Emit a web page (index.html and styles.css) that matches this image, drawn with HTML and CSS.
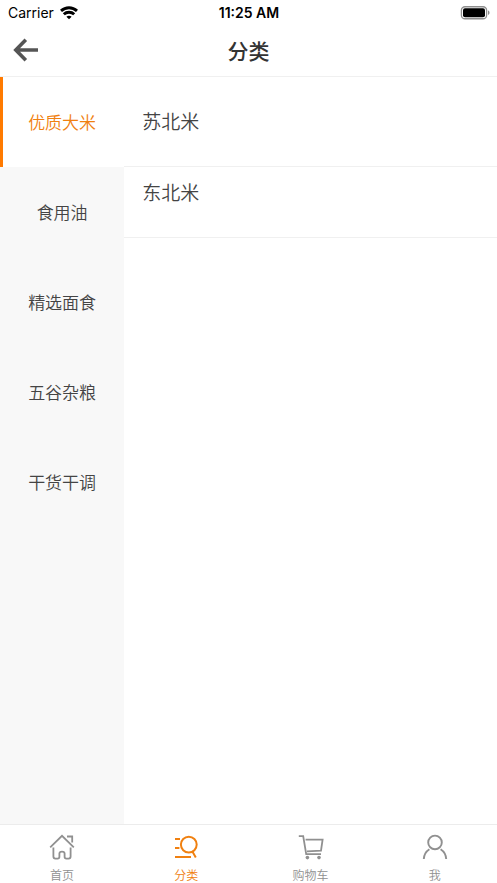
FILE: index.html
```html
<!DOCTYPE html>
<html lang="zh-CN">
<head>
    <meta charset="utf-8" />
    <meta name="viewport" content="width=device-width, initial-scale=1" />
    <title>分类</title>
    <link rel="stylesheet" href="styles.css">
</head>
<body>
    <div class="statusbar">
        <div class="carrier">
            <span>Carrier</span>
            <svg class="wifi" width="18" height="14" viewBox="0 0 18 14" fill="none" stroke="#000" stroke-width="2.9">
                <path d="M1 4.9C5.6 0.6 12.4 0.6 17 4.9" />
                <path d="M3.8 8.3C6.7 5.6 11.3 5.6 14.2 8.3" />
                <path d="M9 13.3L6.4 10.8C7.9 9.5 10.1 9.5 11.6 10.8Z" fill="#000" stroke="none" />
            </svg>
        </div>
        <div class="clock">11:25 AM</div>
        <div class="battery">
            <svg width="30" height="14" viewBox="0 0 30 14">
                <rect x="1.4" y="0.75" width="25.2" height="12" rx="3.6" fill="none" stroke="#8e8e8e" stroke-width="1.3" />
                <rect x="3" y="2.3" width="22" height="9" rx="2" />
                <path d="M28 4.6C30 5.2 30 8.4 28 9Z" fill="#8e8e8e" />
            </svg>
        </div>
    </div>

    <header class="header">
        <button class="back" type="button" aria-label="返回">
            <svg width="26" height="24" viewBox="0 0 26 24" fill="none" stroke="#555" stroke-width="3.6">
                <path d="M25 12H3M12.8 1.8L2.8 12L12.8 22.2" />
            </svg>
        </button>
        <h1 class="title">分类</h1>
    </header>

    <main class="content">
        <nav class="sidebar">
            <a class="category active" href="#">优质大米</a>
            <a class="category" href="#">食用油</a>
            <a class="category" href="#">精选面食</a>
            <a class="category" href="#">五谷杂粮</a>
            <a class="category" href="#">干货干调</a>
        </nav>
        <div class="list">
            <a class="item" href="#">苏北米</a>
            <a class="item" href="#">东北米</a>
        </div>
    </main>

    <nav class="tabbar">
        <a class="tab" href="#">
            <svg width="26" height="26" viewBox="0 0 26 26" fill="none" stroke="currentColor" stroke-width="1.8">
                <path d="M1.2 13.4L13 1.8L24.8 13.4" />
                <path d="M18 2.5H23.2V8.6" />
                <path d="M4.4 13.5V22.6Q4.4 24.6 6.4 24.6H8.6Q10.4 24.6 10.4 22.8V19.6Q10.4 17.6 13 17.6T15.6 19.6V22.8Q15.6 24.6 17.4 24.6H19.6Q21.6 24.6 21.6 22.6V13.5" />
            </svg>
            <span>首页</span>
        </a>
        <a class="tab active" href="#">
            <svg width="26" height="26" viewBox="0 0 26 26" fill="none" stroke="currentColor" stroke-width="2">
                <circle cx="15.8" cy="10.6" r="7.9" />
                <path d="M19.4 17.6L22.8 23.6M2 5H7M2 14H6.4M2 23H18" />
            </svg>
            <span>分类</span>
        </a>
        <a class="tab" href="#">
            <svg width="26" height="26" viewBox="0 0 26 26" fill="none" stroke="currentColor" stroke-width="1.8">
                <path d="M0.8 2.2H5.2L8.2 20.2H23" />
                <path d="M7.6 5.6H24.6L23 16.6L9 17.4" />
                <circle cx="9.4" cy="23.6" r="1.8" fill="currentColor" stroke="none" />
                <circle cx="21" cy="23.6" r="1.8" fill="currentColor" stroke="none" />
            </svg>
            <span>购物车</span>
        </a>
        <a class="tab" href="#">
            <svg width="26" height="26" viewBox="0 0 26 26" fill="none" stroke="currentColor" stroke-width="1.9">
                <circle cx="13" cy="8.4" r="6.8" />
                <path d="M1.8 25C2 20.8 4 17.4 7.4 15.2M18.6 15.2C22 17.4 24 20.8 24.2 25" />
            </svg>
            <span>我</span>
        </a>
    </nav>
</body>
</html>
```
FILE: styles.css
```css
* {
    box-sizing: border-box;
}
body {
    margin: 0;
    min-height: 100vh;
    display: flex;
    flex-direction: column;
    background: #fff;
    color: #444;
    font-family: Inter, "Noto Sans CJK SC", sans-serif;
    font-weight: 350;
}
a {
    color: inherit;
    text-decoration: none;
}
svg {
    display: block;
    flex-shrink: 0;
}

/* status bar */
.statusbar {
    height: 25px;
    padding: 0 7px 0 8px;
    display: grid;
    grid-template-columns: 1fr auto 1fr;
    align-items: center;
    color: #000;
    font-size: 14px;
    font-weight: 400;
}
.carrier {
    display: flex;
    align-items: center;
    gap: 6px;
}
.clock {
    font-size: 14px;
    font-weight: 600;
}
.battery {
    justify-self: end;
}

/* header */
.header {
    height: 52px;
    padding: 0 13px 2px;
    display: grid;
    grid-template-columns: 1fr auto 1fr;
    align-items: center;
    border-bottom: 1px solid #f0f0f0;
}
.back {
    justify-self: start;
    padding: 0;
    border: none;
    background: none;
    cursor: pointer;
}
.title {
    margin: 0;
    color: #333;
    font-size: 21px;
    font-weight: 500;
}

/* categories */
.content {
    flex: 1;
    display: flex;
}
.sidebar {
    width: 25%;
    background: #f8f8f8;
}
.category {
    height: 90px;
    padding-bottom: 2px;
    display: flex;
    align-items: center;
    justify-content: center;
    border-left: 3px solid transparent;
    border-right: 3px solid transparent;
    font-size: 17px;
}
.category.active {
    background: #fff;
    border-left-color: #ff7a00;
    color: #f08010;
}
.list {
    flex: 1;
    padding-top: 19px;
}
.item {
    height: 71px;
    padding: 12px 18px;
    display: block;
    border-bottom: 1px solid #f0f0f0;
    font-size: 19px;
    line-height: 30px;
}

/* bottom tabs */
.tabbar {
    height: 59px;
    padding-top: 9px;
    display: flex;
    border-top: 1px solid #ececec;
}
.tab {
    flex: 1;
    display: flex;
    flex-direction: column;
    align-items: center;
    gap: 9px;
    color: #909090;
    font-size: 12px;
    line-height: 14px;
}
.tab.active {
    color: #f08010;
}
```
